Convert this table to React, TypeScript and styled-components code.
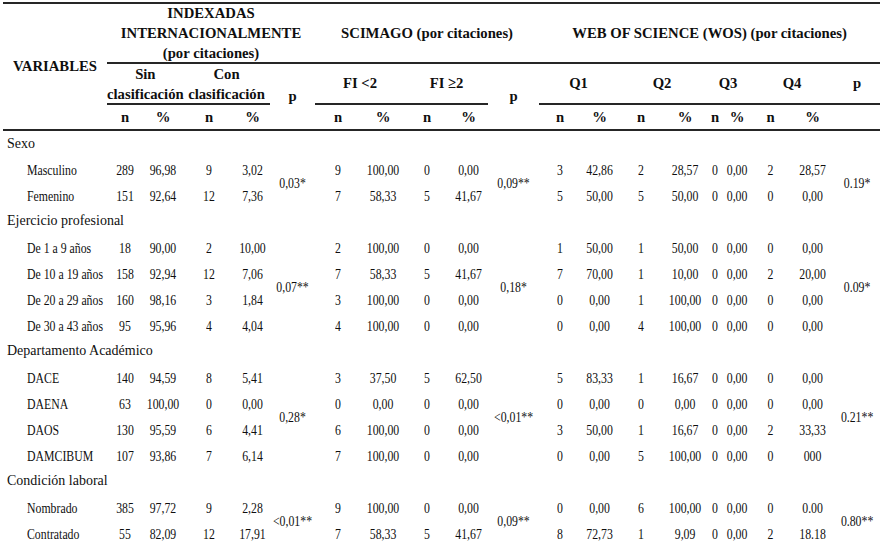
import React from 'react';
import styled, { createGlobalStyle } from 'styled-components';

const GlobalStyle = createGlobalStyle`
  html, body {
    margin: 0;
    padding: 0;
    background: #ffffff;
  }
  body {
    font-family: "Liberation Serif", "Times New Roman", serif;
    color: #0f0f0f;
  }
`;

const Page = styled.div`
  width: 882px;
  height: 542px;
  overflow: hidden;
  box-sizing: border-box;
  padding: 2px 0 0 3px;
`;

const Table = styled.table`
  border-collapse: collapse;
  table-layout: fixed;
  width: 877px;
`;

const Col = styled.col<{ $w: number }>`
  width: ${p => p.$w}px;
`;

const RULE = '2px solid #262626';

const HeadRow = styled.tr<{ $h: number }>`
  height: ${p => p.$h}px;
`;

const Head = styled.th<{ $top?: boolean; $bottom?: boolean }>`
  padding: 0;
  font-weight: bold;
  font-size: 14.7px;
  line-height: 19px;
  text-align: center;
  vertical-align: middle;
  white-space: nowrap;
  border-top: ${p => (p.$top ? RULE : 'none')};
  border-bottom: ${p => (p.$bottom ? RULE : 'none')};
`;

const HeadText = styled.span`
  display: inline-block;
  transform: scaleY(1.06);
`;

const Row = styled.tr`
  height: 26px;
`;

const GroupLabel = styled.td`
  padding: 0 0 0 4px;
  text-align: left;
  vertical-align: middle;
  white-space: nowrap;
  font-size: 14px;
`;

const GroupText = styled.span`
  display: inline-block;
  transform: scaleY(1.08);
`;

const Label = styled.td`
  padding: 0 0 0 24px;
  text-align: left;
  vertical-align: middle;
  white-space: nowrap;
`;

const Cell = styled.td`
  padding: 0;
  text-align: center;
  vertical-align: middle;
  white-space: nowrap;
`;

// the source type is a condensed Times: narrow set, tall glyphs
const Cond = styled.span`
  display: inline-block;
  font-size: 11.8px;
  line-height: 14px;
  transform: scaleY(1.27);
`;

const widths = [104, 36, 40, 52, 35, 45, 46, 44, 44, 39, 51, 42, 37, 46, 42, 18, 26, 41, 43, 46];

interface Sub {
  label: string;
  v: string[];
}

interface Group {
  title: string;
  p: [string, string, string];
  rows: Sub[];
}

const groups: Group[] = [
  {
    title: 'Sexo',
    p: ['0,03*', '0,09**', '0.19*'],
    rows: [
      { label: 'Masculino', v: ['289', '96,98', '9', '3,02', '9', '100,00', '0', '0,00', '3', '42,86', '2', '28,57', '0', '0,00', '2', '28,57'] },
      { label: 'Femenino', v: ['151', '92,64', '12', '7,36', '7', '58,33', '5', '41,67', '5', '50,00', '5', '50,00', '0', '0,00', '0', '0,00'] }
    ]
  },
  {
    title: 'Ejercicio profesional',
    p: ['0,07**', '0,18*', '0.09*'],
    rows: [
      { label: 'De 1 a 9 años', v: ['18', '90,00', '2', '10,00', '2', '100,00', '0', '0,00', '1', '50,00', '1', '50,00', '0', '0,00', '0', '0,00'] },
      { label: 'De 10 a 19 años', v: ['158', '92,94', '12', '7,06', '7', '58,33', '5', '41,67', '7', '70,00', '1', '10,00', '0', '0,00', '2', '20,00'] },
      { label: 'De 20 a 29 años', v: ['160', '98,16', '3', '1,84', '3', '100,00', '0', '0,00', '0', '0,00', '1', '100,00', '0', '0,00', '0', '0,00'] },
      { label: 'De 30 a 43 años', v: ['95', '95,96', '4', '4,04', '4', '100,00', '0', '0,00', '0', '0,00', '4', '100,00', '0', '0,00', '0', '0,00'] }
    ]
  },
  {
    title: 'Departamento Académico',
    p: ['0,28*', '<0,01**', '0.21**'],
    rows: [
      { label: 'DACE', v: ['140', '94,59', '8', '5,41', '3', '37,50', '5', '62,50', '5', '83,33', '1', '16,67', '0', '0,00', '0', '0,00'] },
      { label: 'DAENA', v: ['63', '100,00', '0', '0,00', '0', '0,00', '0', '0,00', '0', '0,00', '0', '0,00', '0', '0,00', '0', '0,00'] },
      { label: 'DAOS', v: ['130', '95,59', '6', '4,41', '6', '100,00', '0', '0,00', '3', '50,00', '1', '16,67', '0', '0,00', '2', '33,33'] },
      { label: 'DAMCIBUM', v: ['107', '93,86', '7', '6,14', '7', '100,00', '0', '0,00', '0', '0,00', '5', '100,00', '0', '0,00', '0', '000'] }
    ]
  },
  {
    title: 'Condición laboral',
    p: ['<0,01**', '0,09**', '0.80**'],
    rows: [
      { label: 'Nombrado', v: ['385', '97,72', '9', '2,28', '9', '100,00', '0', '0,00', '0', '0,00', '6', '100,00', '0', '0,00', '0', '0.00'] },
      { label: 'Contratado', v: ['55', '82,09', '12', '17,91', '7', '58,33', '5', '41,67', '8', '72,73', '1', '9,09', '0', '0,00', '2', '18.18'] }
    ]
  }
];

const H: React.FC<{ children: React.ReactNode }> = ({ children }) => <HeadText>{children}</HeadText>;

const GroupRows: React.FC<{ group: Group }> = ({ group }) => {
  const span = group.rows.length;
  const pCell = (value: string) => (
    <Cell rowSpan={span}>
      <Cond>{value}</Cond>
    </Cell>
  );
  return (
    <>
      <Row>
        <GroupLabel colSpan={20}>
          <GroupText>{group.title}</GroupText>
        </GroupLabel>
      </Row>
      {group.rows.map((r, i) => (
        <Row key={r.label}>
          <Label>
            <Cond>{r.label}</Cond>
          </Label>
          {r.v.slice(0, 4).map((x, k) => (
            <Cell key={'a' + k}>
              <Cond>{x}</Cond>
            </Cell>
          ))}
          {i === 0 && pCell(group.p[0])}
          {r.v.slice(4, 8).map((x, k) => (
            <Cell key={'b' + k}>
              <Cond>{x}</Cond>
            </Cell>
          ))}
          {i === 0 && pCell(group.p[1])}
          {r.v.slice(8, 16).map((x, k) => (
            <Cell key={'c' + k}>
              <Cond>{x}</Cond>
            </Cell>
          ))}
          {i === 0 && pCell(group.p[2])}
        </Row>
      ))}
    </>
  );
};

const App: React.FC = () => {
  const nPct = (count: number) =>
    Array.from({ length: count }).map((_, i) => (
      <Head key={i} $bottom>
        <H>{i % 2 === 0 ? 'n' : '%'}</H>
      </Head>
    ));

  return (
    <Page>
      <GlobalStyle />
      <Table>
        <colgroup>
          {widths.map((w, i) => (
            <Col key={i} $w={w} />
          ))}
        </colgroup>
        <thead>
          <HeadRow $h={60}>
            <Head rowSpan={3} $top $bottom>
              <H>VARIABLES</H>
            </Head>
            <Head colSpan={5} $top $bottom>
              <H>
                INDEXADAS
                <br />
                INTERNACIONALMENTE
                <br />
                (por citaciones)
              </H>
            </Head>
            <Head colSpan={5} $top $bottom>
              <H>SCIMAGO (por citaciones)</H>
            </Head>
            <Head colSpan={9} $top $bottom>
              <H>WEB OF SCIENCE (WOS) (por citaciones)</H>
            </Head>
          </HeadRow>
          <HeadRow $h={41}>
            <Head colSpan={2} $bottom>
              <H>
                Sin
                <br />
                clasificación
              </H>
            </Head>
            <Head colSpan={2} $bottom>
              <H>
                Con
                <br />
                clasificación
              </H>
            </Head>
            <Head rowSpan={2} $bottom>
              <H>p</H>
            </Head>
            <Head colSpan={2} $bottom>
              <H>FI &lt;2</H>
            </Head>
            <Head colSpan={2} $bottom>
              <H>FI ≥2</H>
            </Head>
            <Head rowSpan={2} $bottom>
              <H>p</H>
            </Head>
            <Head colSpan={2} $bottom>
              <H>Q1</H>
            </Head>
            <Head colSpan={2} $bottom>
              <H>Q2</H>
            </Head>
            <Head colSpan={2} $bottom>
              <H>Q3</H>
            </Head>
            <Head colSpan={2} $bottom>
              <H>Q4</H>
            </Head>
            <Head $bottom>
              <H>p</H>
            </Head>
          </HeadRow>
          <HeadRow $h={26}>
            {nPct(4)}
            {nPct(4)}
            {nPct(8)}
            <Head $bottom />
          </HeadRow>
        </thead>
        <tbody>
          {groups.map(g => (
            <GroupRows key={g.title} group={g} />
          ))}
        </tbody>
      </Table>
    </Page>
  );
};

export default App;
